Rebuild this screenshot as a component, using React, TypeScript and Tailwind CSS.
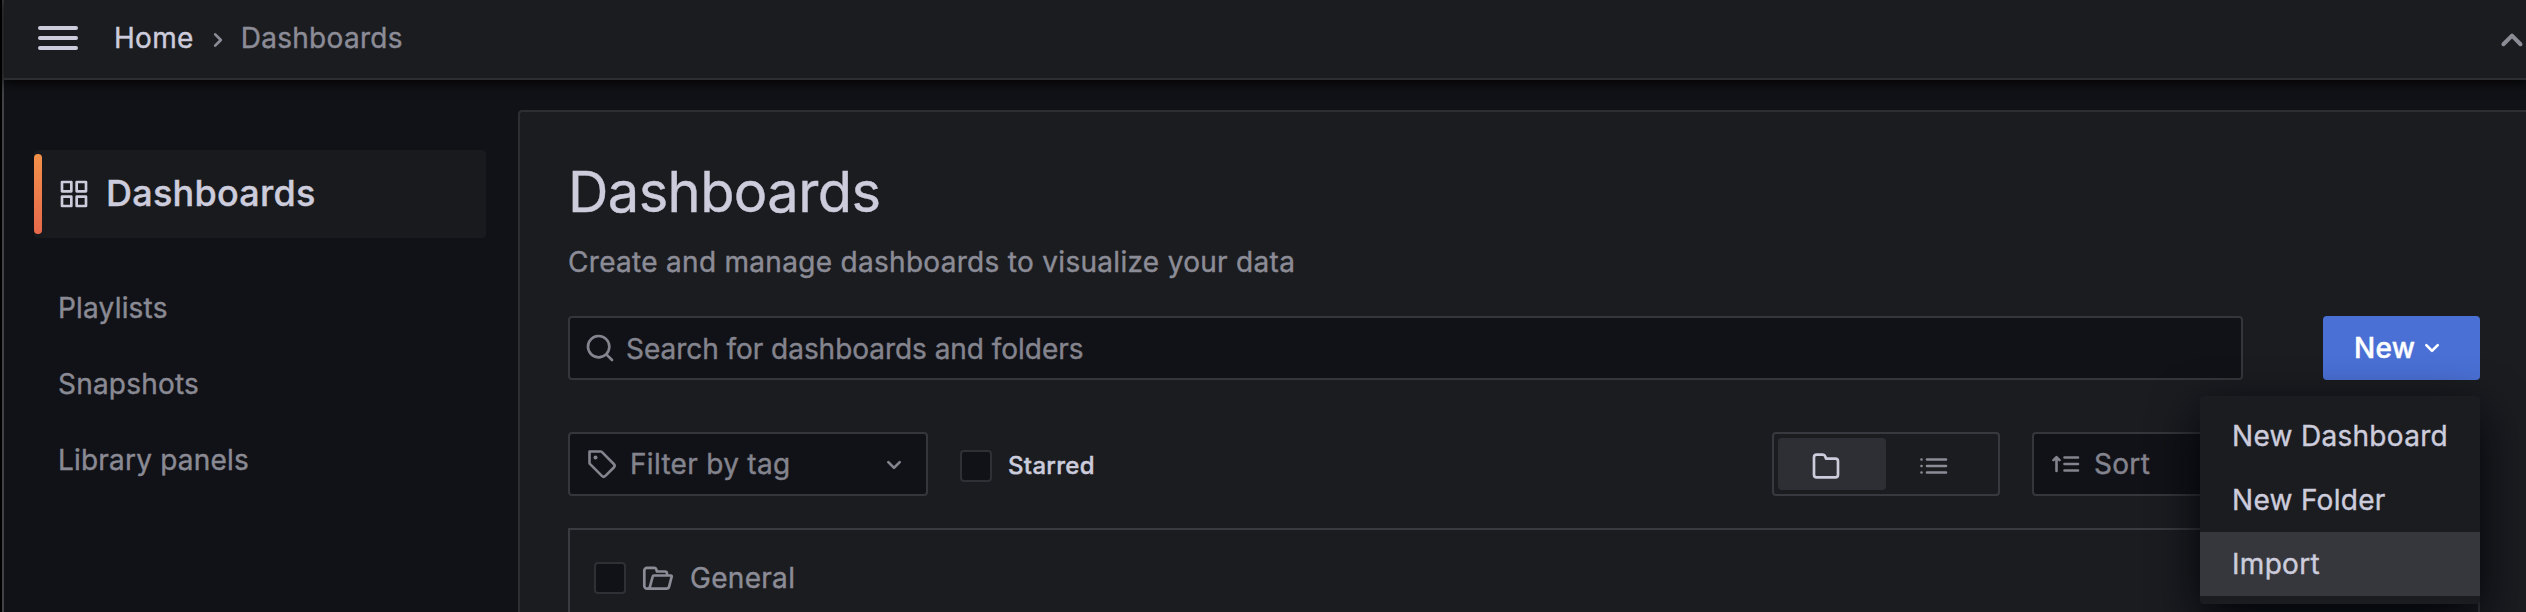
import React from 'react';

type IconProps = { className?: string };

const Apps = ({ className }: IconProps) => (
  <svg viewBox="0 0 24 24" fill="currentColor" className={className}>
    <path d="M10,13H3a1,1,0,0,0-1,1v7a1,1,0,0,0,1,1h7a1,1,0,0,0,1-1V14A1,1,0,0,0,10,13ZM9,20H4V15H9ZM21,2H14a1,1,0,0,0-1,1v7a1,1,0,0,0,1,1h7a1,1,0,0,0,1-1V3A1,1,0,0,0,21,2ZM20,9H15V4h5Zm1,4H14a1,1,0,0,0-1,1v7a1,1,0,0,0,1,1h7a1,1,0,0,0,1-1V14A1,1,0,0,0,21,13Zm-1,7H15V15h5ZM10,2H3A1,1,0,0,0,2,3v7a1,1,0,0,0,1,1h7a1,1,0,0,0,1-1V3A1,1,0,0,0,10,2ZM9,9H4V4H9Z" />
  </svg>
);

const Folder = ({ className }: IconProps) => (
  <svg viewBox="0 0 24 24" fill="currentColor" className={className}>
    <path d="M19,5.5H12.72l-.32-1a3,3,0,0,0-2.84-2H5a3,3,0,0,0-3,3v13a3,3,0,0,0,3,3H19a3,3,0,0,0,3-3V8.5A3,3,0,0,0,19,5.5Zm1,13a1,1,0,0,1-1,1H5a1,1,0,0,1-1-1V5.5a1,1,0,0,1,1-1H9.56a1,1,0,0,1,.95.68l.54,1.64A1,1,0,0,0,12,7.5h7a1,1,0,0,1,1,1Z" />
  </svg>
);

const FolderOpen = ({ className }: IconProps) => (
  <svg viewBox="0 0 32 32" fill="none" stroke="currentColor" strokeWidth="2.7" strokeLinejoin="round" strokeLinecap="round" className={className}>
    <path d="M25 13.5V11.5a2 2 0 0 0-2-2h-8l-.8-2.4a2 2 0 0 0-1.9-1.3H5a2.7 2.7 0 0 0-2.7 2.7V24a2.7 2.7 0 0 0 2.7 2.7H24.5a2.7 2.7 0 0 0 2.6-2L29.7 14.5a.8.8 0 0 0-.8-1H12a1.3 1.3 0 0 0-1.3 1L8 24.5a2.7 2.7 0 0 1-2.6 2.2" />
  </svg>
);

const Search = ({ className }: IconProps) => (
  <svg viewBox="0 0 24 24" fill="currentColor" className={className}>
    <path d="M21.71,20.29,18,16.61A9,9,0,1,0,16.61,18l3.68,3.68a1,1,0,0,0,1.42,0A1,1,0,0,0,21.71,20.29ZM11,18a7,7,0,1,1,7-7A7,7,0,0,1,11,18Z" />
  </svg>
);

const AngleDown = ({ className }: IconProps) => (
  <svg viewBox="0 0 24 24" fill="currentColor" className={className}>
    <path d="M17,9.17a1,1,0,0,0-1.41,0L12,12.71,8.46,9.17a1,1,0,0,0-1.41,0,1,1,0,0,0,0,1.42l4.24,4.24a1,1,0,0,0,1.42,0L17,10.59A1,1,0,0,0,17,9.17Z" />
  </svg>
);

const AngleRight = ({ className }: IconProps) => (
  <svg viewBox="0 0 24 24" fill="currentColor" className={className}>
    <path d="M14.83,11.29,10.59,7.05a1,1,0,0,0-1.42,0,1,1,0,0,0,0,1.41L12.71,12,9.17,15.54a1,1,0,0,0,0,1.41,1,1,0,0,0,.71.29,1,1,0,0,0,.71-.29l4.24-4.24A1,1,0,0,0,14.83,11.29Z" />
  </svg>
);

const Tag = ({ className }: IconProps) => (
  <svg viewBox="0 0 32 32" fill="none" stroke="currentColor" strokeWidth="2.6" strokeLinejoin="round" className={className}>
    <path d="M3.5 3.5H14.8a1.5 1.5 0 0 1 1 .4L27.8 16a2.5 2.5 0 0 1 0 3.5L19.4 27.9a2.5 2.5 0 0 1-3.5 0L3.9 15.9a1.5 1.5 0 0 1-.4-1Z" />
    <circle cx="9.5" cy="9.5" r="2" fill="currentColor" stroke="none" />
  </svg>
);

const ListUl = ({ className }: IconProps) => (
  <svg viewBox="0 0 28 18" fill="none" stroke="currentColor" strokeWidth="2.6" strokeLinecap="round" className={className}>
    <path d="M7 2.5H26M7 9H26M7 15.5H26M1.5 2.5h.01M1.5 9h.01M1.5 15.5h.01" />
  </svg>
);

const SortAmountUp = ({ className }: IconProps) => (
  <svg viewBox="0 0 28 18" fill="none" stroke="currentColor" strokeWidth="2.6" strokeLinecap="round" strokeLinejoin="round" className={className}>
    <path d="M12.5 2.5H26M12.5 9H26M12.5 15.5H26M4.5 16V2.5M1.5 5.2 4.5 2.2 7.5 5.2" />
  </svg>
);

const Checkbox = () => <span className="size-8 shrink-0 rounded-[4px] border-2 border-[#2f3036] bg-[#111217]" />;

const links = ['Playlists', 'Snapshots', 'Library panels'];

export default function App() {
  return (
    <div className="flex h-[612px] w-[2526px] overflow-hidden bg-black font-['Inter',sans-serif] text-[28px] leading-[44px] tracking-[0.3px] text-[#ccccdc] [-webkit-text-stroke:0.4px]">
      <div className="ml-[2px] flex min-w-0 flex-1 flex-col border-l-2 border-[#414246] bg-[#111217]">
        <header className="z-10 flex h-20 shrink-0 items-center border-b-2 border-[#2d2e32] bg-[#1b1c20] pb-[2px] pl-[34px] shadow-[0_2px_10px_2px_rgba(0,0,0,0.75)]">
          <div className="flex w-10 flex-col gap-[6px]">
            <span className="h-1 rounded-full bg-[#ccccdc]" />
            <span className="h-1 rounded-full bg-[#ccccdc]" />
            <span className="h-1 rounded-full bg-[#ccccdc]" />
          </div>
          <nav className="ml-9 flex items-center">
            <span>Home</span>
            <AngleRight className="ml-2 mt-[3px] size-8 text-[#8c8c97]" />
            <span className="ml-[7px] text-[#8c8c97]">Dashboards</span>
          </nav>
          <AngleDown className="mr-[-10px] ml-auto mt-[4px] size-12 rotate-180 text-[#8c8c97]" />
        </header>

        <div className="flex min-h-0 flex-1">
          <aside className="w-[514px] shrink-0 pt-[70px] pr-8 pl-[30px]">
            <div className="flex h-[88px] items-center rounded-[4px] bg-[#191a1e]">
              <span className="h-20 w-2 rounded-[4px] bg-linear-to-b from-[#f39149] to-[#e7684b]" />
              <Apps className="ml-4 size-8" />
              <span className="ml-4 pb-[2px] text-[36px] font-medium tracking-[0.25px]">Dashboards</span>
            </div>
            <ul className="mt-[32px] pl-6 tracking-[0.2px] text-[#8a8a94]">
              {links.map((l) => (
                <li key={l} className="flex h-[76px] items-center">{l}</li>
              ))}
            </ul>
          </aside>

          <main className="mt-[30px] min-w-0 flex-1 rounded-tl-[4px] border-t-2 border-l-2 border-[#2d2e32] bg-[#1b1c20] pt-12 pr-[46px] pl-12">
            <h1 className="text-[56px] leading-[64px] tracking-[-0.6px]">Dashboards</h1>
            <p className="mt-4 text-[#8c8c97]">Create and manage dashboards to visualize your data</p>
            <div className="mt-[32px] flex h-16 items-center justify-between">
              <div className="flex h-16 w-[1675px] items-center rounded-[4px] border-2 border-[#35363b] bg-[#111217] pl-[14px] text-[#84848e]">
                <Search className="size-8" />
                <span className="ml-[10px] pt-px tracking-[-0.04px]">Search for dashboards and folders</span>
              </div>
              <button className="flex h-16 w-[157px] items-center rounded-[4px] bg-[#4a70d5] pl-[31px] font-medium text-white">
                New
                <AngleDown className="ml-px size-8" />
              </button>
            </div>

            <div className="mt-[52px] flex h-16 items-center">
              <div className="flex h-16 w-[360px] items-center rounded-[4px] border-2 border-[#35363b] bg-[#111217] pl-4 text-[#84848e]">
                <Tag className="size-8" />
                <span className="ml-3">Filter by tag</span>
                <AngleDown className="mr-4 ml-auto mt-[2px] size-8" />
              </div>
              <div className="ml-8 flex items-center gap-4 pt-[3px] text-[24px] font-medium">
                <Checkbox />
                <span>Starred</span>
              </div>
              <div className="ml-auto flex h-16 w-[228px] rounded-[4px] border-2 border-[#38393f] p-1">
                <span className="flex w-[108px] items-center justify-center rounded-[4px] bg-[#2e2f34] pt-1 pr-3">
                  <Folder className="size-8" />
                </span>
                <span className="flex w-[108px] items-center justify-center pt-1 pr-3 text-[#8c8c97]">
                  <ListUl className="h-[18px] w-7" />
                </span>
              </div>
              <div className="ml-8 flex h-16 w-[448px] items-center rounded-[4px] border-2 border-[#35363b] bg-[#111217] pl-[18px] text-[#84848e]">
                <SortAmountUp className="h-[18px] w-7" />
                <span className="ml-[14px]">Sort</span>
              </div>
            </div>

            <section className="mt-8 h-[100px] border-2 border-[#3a3b41] pt-[26px] pl-6">
              <div className="flex items-center text-[#8c8c97]">
                <Checkbox />
                <FolderOpen className="ml-4 size-8" />
                <span className="ml-4">General</span>
              </div>
            </section>
          </main>
        </div>
      </div>

      <div className="absolute top-[396px] left-[2200px] h-[208px] w-[280px] rounded-[4px] bg-[#1b1c20] py-2 shadow-[0_16px_48px_#010409]">
        <div className="flex h-16 items-center pl-8">New Dashboard</div>
        <div className="flex h-16 items-center pl-8">New Folder</div>
        <div className="flex h-16 items-center bg-[#36373c] pl-8">Import</div>
      </div>
    </div>
  );
}
